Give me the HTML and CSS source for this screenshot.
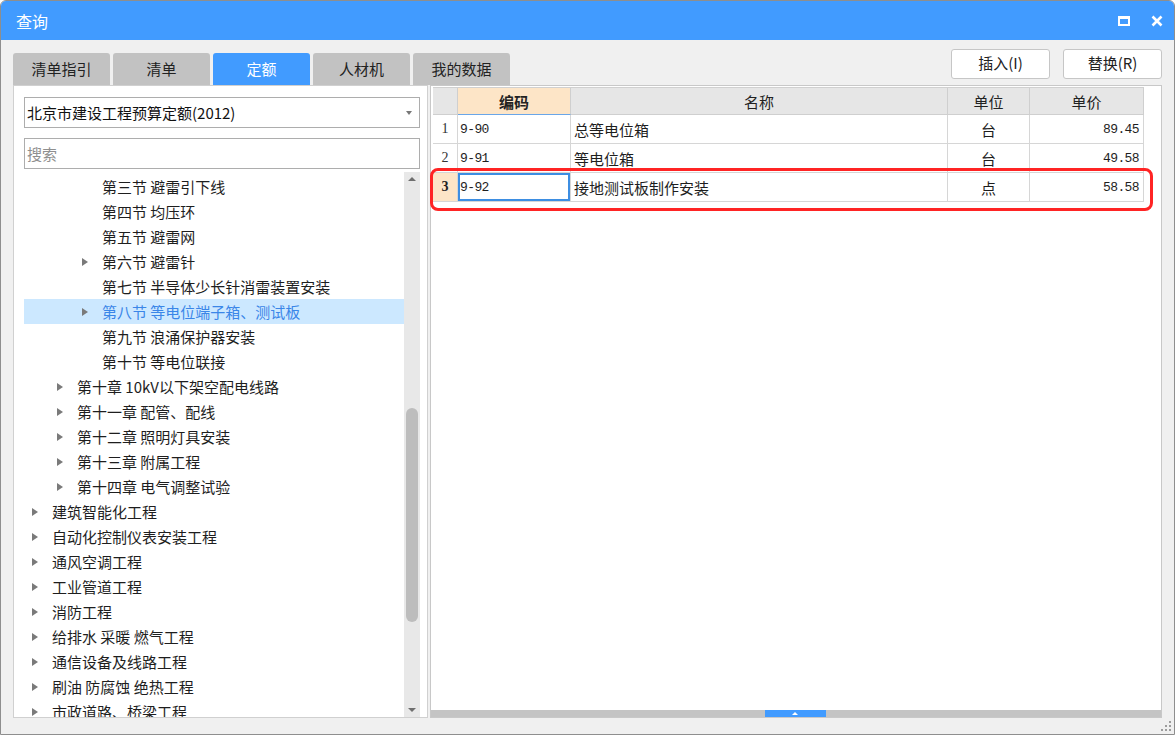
FILE: index.html
```html
<!DOCTYPE html>
<html lang="zh">
<head>
    <meta charset="UTF-8">
    <title>查询</title>
    <link rel="stylesheet" href="styles.css">
</head>
<body>
    <div class="window">
        <div class="titlebar">
            <span class="title">查询</span>
            <div class="title-ctrls">
                <svg width="12" height="10" viewBox="0 0 12 10">
                    <rect x="1" y="1.5" width="10" height="7.5" fill="none" stroke="#fff" stroke-width="2"/>
                    <rect x="0" y="0" width="12" height="3" fill="#fff"/>
                </svg>
                <svg width="12" height="12" viewBox="0 0 12 12">
                    <path d="M1.5 1.5 L10.5 10.5 M10.5 1.5 L1.5 10.5" stroke="#fff" stroke-width="2.6"/>
                </svg>
            </div>
        </div>

        <div class="toolbar">
            <div class="tabs">
                <div class="tab">清单指引</div>
                <div class="tab">清单</div>
                <div class="tab active">定额</div>
                <div class="tab">人材机</div>
                <div class="tab">我的数据</div>
            </div>
            <div class="actions">
                <button class="btn">插入(I)</button>
                <button class="btn">替换(R)</button>
            </div>
        </div>

        <div class="main">
            <div class="left-panel">
                <div class="select">
                    <span>北京市建设工程预算定额(2012)</span>
                    <span class="caret"></span>
                </div>
                <div class="search">搜索</div>
                <div class="tree">
                    <ul class="tree-list">
                        <li class="node lv3"><span class="arrow"></span>第三节 避雷引下线</li>
                        <li class="node lv3"><span class="arrow"></span>第四节 均压环</li>
                        <li class="node lv3"><span class="arrow"></span>第五节 避雷网</li>
                        <li class="node lv3"><span class="arrow has"></span>第六节 避雷针</li>
                        <li class="node lv3"><span class="arrow"></span>第七节 半导体少长针消雷装置安装</li>
                        <li class="node lv3 selected"><span class="arrow has"></span>第八节 等电位端子箱、测试板</li>
                        <li class="node lv3"><span class="arrow"></span>第九节 浪涌保护器安装</li>
                        <li class="node lv3"><span class="arrow"></span>第十节 等电位联接</li>
                        <li class="node lv2"><span class="arrow has"></span>第十章 10kV以下架空配电线路</li>
                        <li class="node lv2"><span class="arrow has"></span>第十一章 配管、配线</li>
                        <li class="node lv2"><span class="arrow has"></span>第十二章 照明灯具安装</li>
                        <li class="node lv2"><span class="arrow has"></span>第十三章 附属工程</li>
                        <li class="node lv2"><span class="arrow has"></span>第十四章 电气调整试验</li>
                        <li class="node lv1"><span class="arrow has"></span>建筑智能化工程</li>
                        <li class="node lv1"><span class="arrow has"></span>自动化控制仪表安装工程</li>
                        <li class="node lv1"><span class="arrow has"></span>通风空调工程</li>
                        <li class="node lv1"><span class="arrow has"></span>工业管道工程</li>
                        <li class="node lv1"><span class="arrow has"></span>消防工程</li>
                        <li class="node lv1"><span class="arrow has"></span>给排水 采暖 燃气工程</li>
                        <li class="node lv1"><span class="arrow has"></span>通信设备及线路工程</li>
                        <li class="node lv1"><span class="arrow has"></span>刷油 防腐蚀 绝热工程</li>
                        <li class="node lv1"><span class="arrow has"></span>市政道路、桥梁工程</li>
                    </ul>
                    <div class="vscroll">
                        <span class="vs-up"></span>
                        <span class="vs-thumb"></span>
                        <span class="vs-down"></span>
                    </div>
                </div>
            </div>

            <div class="right-panel">
                <div class="grid">
                    <div class="hd"></div>
                    <div class="hd hd-active">编码</div>
                    <div class="hd">名称</div>
                    <div class="hd">单位</div>
                    <div class="hd">单价</div>

                    <div class="cell num">1</div>
                    <div class="cell code">9-90</div>
                    <div class="cell name">总等电位箱</div>
                    <div class="cell unit">台</div>
                    <div class="cell price">89.45</div>

                    <div class="cell num">2</div>
                    <div class="cell code">9-91</div>
                    <div class="cell name">等电位箱</div>
                    <div class="cell unit">台</div>
                    <div class="cell price">49.58</div>

                    <div class="cell num current">3</div>
                    <div class="cell code focus">9-92</div>
                    <div class="cell name">接地测试板制作安装</div>
                    <div class="cell unit">点</div>
                    <div class="cell price">58.58</div>
                </div>
                <div class="mark-box"></div>
                <div class="hscroll">
                    <span class="hs-thumb"></span>
                </div>
            </div>
        </div>

        <div class="statusbar">
            <svg width="11" height="11" viewBox="0 0 11 11" fill="#9c9c9c">
                <rect x="8" y="0" width="2" height="2"/>
                <rect x="8" y="4" width="2" height="2"/>
                <rect x="4" y="4" width="2" height="2"/>
                <rect x="8" y="8" width="2" height="2"/>
                <rect x="4" y="8" width="2" height="2"/>
                <rect x="0" y="8" width="2" height="2"/>
            </svg>
        </div>
    </div>
</body>
</html>
```

FILE: styles.css
```css
* {
    box-sizing: border-box;
}
body {
    margin: 0;
    background-color: #ffffff;
    font-family: "Noto Sans CJK SC", "Liberation Sans", sans-serif;
    font-size: 15px;
    color: #1e1e1e;
}
.window {
    width: 1175px;
    height: 735px;
    border: 1px solid #8e8e8e;
    border-radius: 6px 6px 0 0;
    overflow: hidden;
    background-color: #f0f0f0;
    display: flex;
    flex-direction: column;
}

/* 标题栏 */
.titlebar {
    height: 39px;
    flex-shrink: 0;
    background-color: #419bff;
    color: #fff;
    display: flex;
    align-items: center;
    justify-content: space-between;
    padding: 0 11px 0 15px;
}
.title {
    font-size: 16px;
}
.title-ctrls {
    display: flex;
    align-items: center;
    gap: 21px;
}

/* 页签 + 按钮 */
.toolbar {
    height: 45px;
    flex-shrink: 0;
    display: flex;
    justify-content: space-between;
    padding: 0 12px;
}
.tabs {
    display: flex;
    align-items: flex-end;
    gap: 3px;
}
.tab {
    width: 97px;
    height: 32px;
    padding-bottom: 1px;
    background-color: #c2c2c2;
    border-radius: 3px 3px 0 0;
    display: flex;
    align-items: center;
    justify-content: center;
    color: #222;
}
.tab.active {
    background-color: #419bff;
    color: #fff;
}
.actions {
    display: flex;
    gap: 13px;
    padding-top: 9px;
}
.btn {
    width: 99px;
    height: 30px;
    padding: 0 0 3px 0;
    background-color: #fff;
    border: 1px solid #c6c6c6;
    border-radius: 3px;
    font: inherit;
    color: #222;
}

/* 主体 */
.main {
    flex: 1;
    min-height: 0;
    display: flex;
    gap: 2px;
    padding: 0 12px;
}

/* 左侧定额树 */
.left-panel {
    width: 415px;
    background-color: #fff;
    border: 1px solid #d0d0d0;
    padding: 11px 7px 0 10px;
    display: flex;
    flex-direction: column;
}
.select {
    height: 31px;
    flex-shrink: 0;
    border: 1px solid #adadad;
    padding: 0 7px 0 2px;
    display: flex;
    align-items: center;
    justify-content: space-between;
    color: #111;
}
.caret {
    width: 0;
    height: 0;
    border-left: 3px solid transparent;
    border-right: 3px solid transparent;
    border-top: 4px solid #777;
}
.search {
    height: 31px;
    flex-shrink: 0;
    margin-top: 10px;
    border: 1px solid #adadad;
    padding-left: 2px;
    line-height: 29px;
    color: #8f8f8f;
}
.tree {
    flex: 1;
    min-height: 0;
    margin-top: 3px;
    display: flex;
    overflow: hidden;
}
.tree-list {
    flex: 1;
    margin: 0;
    padding: 2px 0 0 0;
    list-style: none;
    overflow: hidden;
}
.node {
    height: 25px;
    display: flex;
    align-items: center;
    white-space: nowrap;
    color: #1e1e1e;
}
.node.lv1 {
    padding-left: 8px;
}
.node.lv2 {
    padding-left: 33px;
}
.node.lv3 {
    padding-left: 58px;
}
.node.selected {
    background-color: #cce8ff;
    color: #3a86e8;
}
.arrow {
    width: 20px;
    flex-shrink: 0;
    display: flex;
    align-items: center;
}
.arrow.has::before {
    content: "";
    width: 0;
    height: 0;
    border-top: 4px solid transparent;
    border-bottom: 4px solid transparent;
    border-left: 6px solid #7a7a7a;
}
.vscroll {
    width: 16px;
    flex-shrink: 0;
    background-color: #e8e8e8;
    position: relative;
}
.vs-up,
.vs-down {
    position: absolute;
    left: 4px;
    width: 0;
    height: 0;
    border-left: 4px solid transparent;
    border-right: 4px solid transparent;
}
.vs-up {
    top: 5px;
    border-bottom: 4px solid #6e6e6e;
}
.vs-down {
    bottom: 5px;
    border-top: 4px solid #6e6e6e;
}
.vs-thumb {
    position: absolute;
    left: 2px;
    top: 236px;
    width: 12px;
    height: 214px;
    border-radius: 6px;
    background-color: #bdbdbd;
}

/* 右侧表格 */
.right-panel {
    flex: 1;
    position: relative;
    display: flex;
    flex-direction: column;
    background-color: #fff;
    border: 1px solid #c8c8c8;
    padding: 1px 0 0 2px;
}
.grid {
    display: grid;
    grid-template-columns: 25px 113px 377px 82px 114px;
    width: 711px;
    border-top: 1px solid #d0d0d0;
}
.hd {
    height: 27px;
    background-color: #e6e6e6;
    border-right: 1px solid #cfcfcf;
    border-bottom: 1px solid #cfcfcf;
    display: flex;
    align-items: center;
    justify-content: center;
    color: #222;
}
.hd-active {
    background-color: #fde5c7;
    border-bottom-color: #6aa6e8;
    font-weight: bold;
}
.cell {
    height: 29px;
    border-right: 1px solid #d6d6d6;
    border-bottom: 1px solid #d6d6d6;
    display: flex;
    align-items: center;
    white-space: nowrap;
}
.cell.num {
    justify-content: center;
    font-family: "Liberation Serif", serif;
    font-size: 14px;
    color: #333;
}
.cell.num.current {
    background-color: #fde5c7;
    font-weight: bold;
    color: #222;
}
.cell.code {
    padding-left: 2px;
    font-family: "Liberation Mono", monospace;
    font-size: 13px;
    letter-spacing: -0.6px;
}
.cell.focus {
    box-shadow: inset 0 0 0 2px #3d8ee2;
}
.cell.name {
    padding-left: 3px;
}
.cell.unit {
    justify-content: center;
}
.cell.price {
    justify-content: flex-end;
    padding-right: 4px;
    font-family: "Liberation Mono", monospace;
    font-size: 13px;
    letter-spacing: -0.6px;
}
.mark-box {
    position: absolute;
    left: -1px;
    top: 82px;
    width: 723px;
    height: 43px;
    border: 3px solid #ff2424;
    border-radius: 8px;
}
.hscroll {
    margin-top: auto;
    margin-left: -2px;
    height: 7px;
    background-color: #c4c4c4;
    position: relative;
}
.hs-thumb {
    position: absolute;
    left: 334px;
    top: 0;
    width: 61px;
    height: 7px;
    background-color: #419bff;
}
.hs-thumb::after {
    content: "";
    position: absolute;
    left: 27px;
    top: 2px;
    width: 0;
    height: 0;
    border-left: 3px solid transparent;
    border-right: 3px solid transparent;
    border-bottom: 3px solid #fff;
}

/* 底部 */
.statusbar {
    height: 16px;
    flex-shrink: 0;
    display: flex;
    justify-content: flex-end;
    align-items: flex-end;
    padding: 0 2px 2px 0;
}
```
